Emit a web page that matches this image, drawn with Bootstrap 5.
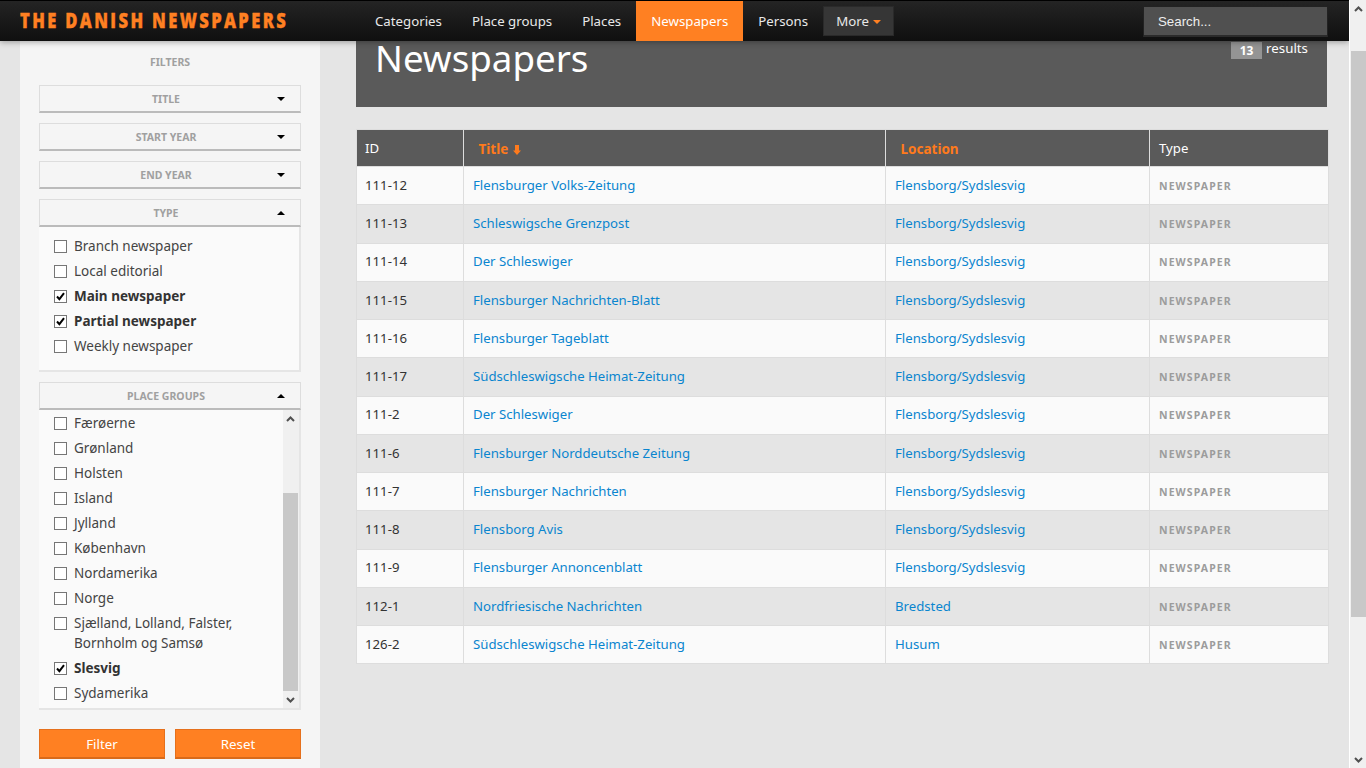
<!DOCTYPE html>
<html lang="en">
<head>
<meta charset="utf-8">
<title>The Danish Newspapers</title>
<link href="https://cdn.jsdelivr.net/npm/bootstrap@5.3.0/dist/css/bootstrap.min.css" rel="stylesheet">
<style>
html,body{height:768px;overflow:hidden}
body{font-family:"Noto Sans","Open Sans",sans-serif;font-size:13.2px;color:#333;background:#e5e5e5}
.dn-page{width:1366px;height:768px}
.dn-main{width:1349px;height:768px;overflow:hidden}
.dn-nav{height:41px;padding:0;background:linear-gradient(#242424,#0f0f0f);border-top:1px solid #000;box-shadow:0 1px 6px rgba(0,0,0,.35);z-index:5;flex-wrap:nowrap;justify-content:flex-start;align-items:flex-start;position:relative}
.dn-brand{display:block;width:360px;padding:0 0 0 20px;margin:0;overflow:visible;color:#ff8022;white-space:nowrap}
.dn-brand span{display:inline-block;font-family:"Open Sans",sans-serif;font-weight:800;font-size:21px;letter-spacing:3px;-webkit-text-stroke:.4px #ff8022;line-height:39px;transform:scaleX(.788);transform-origin:left center}
.dn-brand:hover{color:#ff8022}
.dn-links .nav-link{padding:0 15px 0;line-height:40px;height:40px;color:#e8e8e8;font-size:13.26px}
.dn-links .nav-link.active{background:#ff8022;color:#fff}
.dn-more{height:30px;margin:5px 0 0;padding:1px 12px 0;background:#363636;border:1px solid #2a2a2a;border-radius:0;color:#e8e8e8;font-size:13.26px;display:flex;align-items:center;gap:4px}
.dn-caret{width:0;height:0;border-left:4px solid transparent;border-right:4px solid transparent;border-top:4px solid #ff8022;display:inline-block}
.dn-search{width:185px;height:31px;margin:5px 21px 0 auto;padding:0 14px;background:#505050;border:1px solid #222;border-bottom:2px solid #2b2b2b;border-radius:0;color:#eee;font-size:13.3px;font-family:"Liberation Sans",sans-serif}
.dn-search::placeholder{color:#eee;opacity:1}
.dn-side{width:300px;margin-left:20px;height:727px;background:#f5f5f5;padding:14px 19px 0;flex:none}
.dn-side-title{font-size:10.5px;font-weight:700;color:#a0a0a0;text-align:center;line-height:15px;margin:0 0 15px}
.dn-acc{margin-bottom:10px;border-radius:0;border:0;background:transparent}
.dn-acc-head{height:28px;background:#f5f5f5;border:1px solid #ddd;border-bottom:2px solid #bbb;font-size:10.5px;font-weight:700;color:#a0a0a0;display:flex;align-items:center;justify-content:center;padding:2px 8px 0 0;position:relative;border-radius:0}
.dn-tri{position:absolute;right:15px;top:11px;width:0;height:0;border-left:4px solid transparent;border-right:4px solid transparent}
.dn-tri.dn-down{border-top:4px solid #000}
.dn-tri.dn-up{border-bottom:4px solid #000}
.dn-acc-body{background:#fafafa;border-right:2px solid #e5e5e5;border-bottom:2px solid #e5e5e5;padding:7px 0 11px}
.dn-check{display:flex;align-items:flex-start;margin:0;padding:2px 10px 3px 15px;min-height:25px;line-height:20px;color:#444;font-size:13.5px}
.dn-check .form-check-input{float:none;flex:none;width:13px;height:13px;margin:4px 7px 0 0;border:1px solid #767676;border-radius:0;background-color:#fff;box-shadow:none}
.dn-check .form-check-input:checked{background-color:#fff;border-color:#767676;background-size:11px;background-position:center;background-image:url("data:image/svg+xml,%3csvg xmlns='http://www.w3.org/2000/svg' viewBox='0 0 11 11'%3e%3cpath fill='none' stroke='%23000' stroke-width='2' d='M2 5.5l2.4 2.6L9 2.2'/%3e%3c/svg%3e")}
.dn-check.dn-on{font-weight:700;color:#333}
.dn-listwrap{display:flex;height:300px;background:#fafafa;border-right:2px solid #e5e5e5;border-bottom:2px solid #e5e5e5}
.dn-list{flex:1;padding-top:1px;overflow:hidden}
.dn-vbar{flex:none;display:flex;flex-direction:column;background:#f0f0f0;align-items:stretch}
.dn-vbar-inner{width:16px;padding-right:1px}
.dn-vbar-page{width:17px;padding-left:1px;background:#f0f0f0;border-left:1px solid #fff;height:768px}
.dn-arrow{height:17px;display:flex;align-items:center;justify-content:center;flex:none}
.dn-gap-a{height:66px;flex:none}
.dn-thumb-a{height:198px;background:#c8c8c8;flex:none}
.dn-gap-b{height:34px;flex:none}
.dn-thumb-b{height:566px;background:#c8c8c8;flex:none}
.dn-grow{flex:1}
.dn-btn-row{display:flex;gap:10px;margin-top:19px}
.dn-btn{width:126px;height:30px;padding:0;background:#ff8022;color:#fff;border:1px solid #e5701c;border-bottom:2px solid #d86a1a;border-radius:0;font-size:13.3px;line-height:26px}
.dn-btn:hover{background:#ff8022;color:#fff}
.dn-content{width:973px;margin-left:36px;flex:none}
.dn-banner{height:66px;width:971px;background:#5a5a5a;color:#fff;padding:0 19px;display:flex;justify-content:space-between;align-items:flex-start}
.dn-banner h1{font-size:36.7px;font-weight:400;line-height:34px;margin:0}
.dn-count{display:flex;align-items:center;margin-top:-2px;line-height:18px;font-size:13.3px}
.dn-count .badge{background:#949494;border-radius:0;width:31px;padding:0;height:17px;line-height:17px;font-size:12px;margin-right:4px;position:relative;top:2px}
.dn-table{margin:22px 0 0;width:973px;table-layout:fixed;border-collapse:collapse;--bs-table-bg:transparent}
.dn-table>*>tr>*{border:1px solid #ddd;padding:0 8px 0 9px;vertical-align:middle;box-shadow:none}
.dn-table>*>tr>*:first-child{padding-left:8px}
.dn-table thead th{background:#5a5a5a;color:#fff;font-weight:400;height:37px;padding-top:2px;border-color:#ddd}
.dn-table thead th a{color:#ff7a1c;font-weight:700;margin-left:5.5px;font-size:13.5px;text-decoration:none}
.dn-table thead svg{vertical-align:-1px;margin-left:1px}
.dn-table tbody td{height:38.25px;color:#333;padding-top:.5px}
.dn-table tbody tr:nth-child(odd) td{background:#fafafa}
.dn-table tbody tr:nth-child(even) td{background:#e5e5e5}
.dn-table a{color:#0a85cf;text-decoration:none}
.dn-kind{font-size:10.5px;font-weight:700;letter-spacing:1.1px;color:#9c9c9c}
</style>
</head>
<body>
<div class="dn-page d-flex">
<div class="dn-main">
  <nav class="navbar dn-nav">
    <a class="navbar-brand dn-brand" href="#"><span>THE DANISH NEWSPAPERS</span></a>
    <ul class="nav dn-links flex-nowrap">
      <li class="nav-item"><a class="nav-link" href="#">Categories</a></li>
      <li class="nav-item"><a class="nav-link" href="#">Place groups</a></li>
      <li class="nav-item"><a class="nav-link" href="#">Places</a></li>
      <li class="nav-item"><a class="nav-link active" href="#">Newspapers</a></li>
      <li class="nav-item"><a class="nav-link" href="#">Persons</a></li>
      <li class="nav-item"><button type="button" class="btn dn-more">More <span class="dn-caret"></span></button></li>
    </ul>
    <input class="form-control dn-search" type="text" placeholder="Search...">
  </nav>
  <div class="d-flex">
    <aside class="dn-side">
      <div class="dn-side-title">FILTERS</div>
      <div class="card dn-acc"><div class="dn-acc-head">TITLE<span class="dn-tri dn-down"></span></div></div>
      <div class="card dn-acc"><div class="dn-acc-head">START YEAR<span class="dn-tri dn-down"></span></div></div>
      <div class="card dn-acc"><div class="dn-acc-head">END YEAR<span class="dn-tri dn-down"></span></div></div>
      <div class="card dn-acc">
        <div class="dn-acc-head">TYPE<span class="dn-tri dn-up"></span></div>
        <div class="dn-acc-body">
          <label class="dn-check"><input class="form-check-input" type="checkbox">Branch newspaper</label>
          <label class="dn-check"><input class="form-check-input" type="checkbox">Local editorial</label>
          <label class="dn-check dn-on"><input class="form-check-input" type="checkbox" checked>Main newspaper</label>
          <label class="dn-check dn-on"><input class="form-check-input" type="checkbox" checked>Partial newspaper</label>
          <label class="dn-check"><input class="form-check-input" type="checkbox">Weekly newspaper</label>
        </div>
      </div>
      <div class="card dn-acc mb-0">
        <div class="dn-acc-head">PLACE GROUPS<span class="dn-tri dn-up"></span></div>
        <div class="dn-listwrap">
          <div class="dn-list">
            <label class="dn-check"><input class="form-check-input" type="checkbox">Færøerne</label>
            <label class="dn-check"><input class="form-check-input" type="checkbox">Grønland</label>
            <label class="dn-check"><input class="form-check-input" type="checkbox">Holsten</label>
            <label class="dn-check"><input class="form-check-input" type="checkbox">Island</label>
            <label class="dn-check"><input class="form-check-input" type="checkbox">Jylland</label>
            <label class="dn-check"><input class="form-check-input" type="checkbox">København</label>
            <label class="dn-check"><input class="form-check-input" type="checkbox">Nordamerika</label>
            <label class="dn-check"><input class="form-check-input" type="checkbox">Norge</label>
            <label class="dn-check"><input class="form-check-input" type="checkbox">Sjælland, Lolland, Falster, Bornholm og Samsø</label>
            <label class="dn-check dn-on"><input class="form-check-input" type="checkbox" checked>Slesvig</label>
            <label class="dn-check"><input class="form-check-input" type="checkbox">Sydamerika</label>
          </div>
          <div class="dn-vbar dn-vbar-inner">
            <div class="dn-arrow"><svg width="9" height="6" viewBox="0 0 9 6"><path d="M1 5l3.5-3.5L8 5" fill="none" stroke="#505050" stroke-width="2"/></svg></div>
            <div class="dn-gap-a"></div>
            <div class="dn-thumb-a"></div>
            <div class="dn-arrow"><svg width="9" height="6" viewBox="0 0 9 6"><path d="M1 1l3.5 3.5L8 1" fill="none" stroke="#505050" stroke-width="2"/></svg></div>
          </div>
        </div>
      </div>
      <div class="dn-btn-row">
        <button type="button" class="btn dn-btn">Filter</button>
        <button type="button" class="btn dn-btn">Reset</button>
      </div>
    </aside>
    <section class="dn-content">
      <div class="dn-banner">
        <h1>Newspapers</h1>
        <div class="dn-count"><span class="badge">13</span>results</div>
      </div>
      <table class="table dn-table mb-0">
        <colgroup><col style="width:107px"><col style="width:422px"><col style="width:264px"><col></colgroup>
        <thead><tr><th>ID</th><th><a href="#">Title <svg width="8" height="10" viewBox="0 0 8 10"><path d="M2 0h4v5.500h2L4 10 0 5.500h2z" fill="#ff7a1c"/></svg></a></th><th><a href="#">Location</a></th><th>Type</th></tr></thead>
        <tbody>
          <tr><td>111-12</td><td><a href="#">Flensburger Volks-Zeitung</a></td><td><a href="#">Flensborg/Sydslesvig</a></td><td><span class="dn-kind">NEWSPAPER</span></td></tr>
          <tr><td>111-13</td><td><a href="#">Schleswigsche Grenzpost</a></td><td><a href="#">Flensborg/Sydslesvig</a></td><td><span class="dn-kind">NEWSPAPER</span></td></tr>
          <tr><td>111-14</td><td><a href="#">Der Schleswiger</a></td><td><a href="#">Flensborg/Sydslesvig</a></td><td><span class="dn-kind">NEWSPAPER</span></td></tr>
          <tr><td>111-15</td><td><a href="#">Flensburger Nachrichten-Blatt</a></td><td><a href="#">Flensborg/Sydslesvig</a></td><td><span class="dn-kind">NEWSPAPER</span></td></tr>
          <tr><td>111-16</td><td><a href="#">Flensburger Tageblatt</a></td><td><a href="#">Flensborg/Sydslesvig</a></td><td><span class="dn-kind">NEWSPAPER</span></td></tr>
          <tr><td>111-17</td><td><a href="#">Südschleswigsche Heimat-Zeitung</a></td><td><a href="#">Flensborg/Sydslesvig</a></td><td><span class="dn-kind">NEWSPAPER</span></td></tr>
          <tr><td>111-2</td><td><a href="#">Der Schleswiger</a></td><td><a href="#">Flensborg/Sydslesvig</a></td><td><span class="dn-kind">NEWSPAPER</span></td></tr>
          <tr><td>111-6</td><td><a href="#">Flensburger Norddeutsche Zeitung</a></td><td><a href="#">Flensborg/Sydslesvig</a></td><td><span class="dn-kind">NEWSPAPER</span></td></tr>
          <tr><td>111-7</td><td><a href="#">Flensburger Nachrichten</a></td><td><a href="#">Flensborg/Sydslesvig</a></td><td><span class="dn-kind">NEWSPAPER</span></td></tr>
          <tr><td>111-8</td><td><a href="#">Flensborg Avis</a></td><td><a href="#">Flensborg/Sydslesvig</a></td><td><span class="dn-kind">NEWSPAPER</span></td></tr>
          <tr><td>111-9</td><td><a href="#">Flensburger Annoncenblatt</a></td><td><a href="#">Flensborg/Sydslesvig</a></td><td><span class="dn-kind">NEWSPAPER</span></td></tr>
          <tr><td>112-1</td><td><a href="#">Nordfriesische Nachrichten</a></td><td><a href="#">Bredsted</a></td><td><span class="dn-kind">NEWSPAPER</span></td></tr>
          <tr><td>126-2</td><td><a href="#">Südschleswigsche Heimat-Zeitung</a></td><td><a href="#">Husum</a></td><td><span class="dn-kind">NEWSPAPER</span></td></tr>
        </tbody>
      </table>
    </section>
  </div>
</div>
<div class="dn-vbar dn-vbar-page">
  <div class="dn-arrow"><svg width="9" height="6" viewBox="0 0 9 6"><path d="M1 5l3.5-3.5L8 5" fill="none" stroke="#505050" stroke-width="2"/></svg></div>
  <div class="dn-gap-b"></div>
  <div class="dn-thumb-b"></div>
  <div class="dn-grow"></div>
  <div class="dn-arrow"><svg width="9" height="6" viewBox="0 0 9 6"><path d="M1 1l3.5 3.5L8 1" fill="none" stroke="#505050" stroke-width="2"/></svg></div>
</div>
</div>
<script src="https://cdn.jsdelivr.net/npm/bootstrap@5.3.0/dist/js/bootstrap.bundle.min.js"></script>
</body>
</html>
